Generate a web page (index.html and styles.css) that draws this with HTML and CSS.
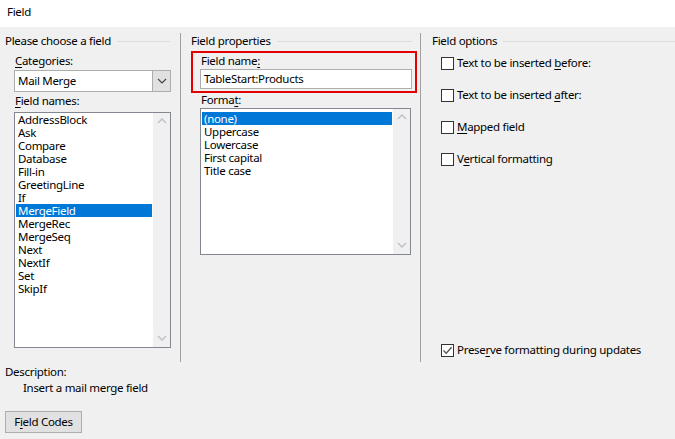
FILE: index.html
```html
<!DOCTYPE html>
<html lang="en">
<head>
  <meta charset="UTF-8" />
  <title>Field</title>
  <link rel="stylesheet" href="styles.css">
</head>
<body>
  <div class="dialog">
    <div class="titlebar">Field</div>

    <div class="body">
      <div class="columns">
        <!-- left: choose a field -->
        <section class="col col-left">
          <div class="group-head"><span>Please choose a field</span><i class="rule"></i></div>
          <div class="label label-first"><u>C</u>ategories:</div>
          <div class="combo">
            <span class="combo-value">Mail Merge</span>
            <span class="combo-btn">
              <svg width="10" height="6" viewBox="0 0 10 6"><polyline points="1,1 5,5 9,1" fill="none" stroke="#444" stroke-width="1.2"/></svg>
            </span>
          </div>
          <div class="label"><u>F</u>ield names:</div>
          <div class="listbox names">
            <ul class="items">
              <li>AddressBlock</li>
              <li>Ask</li>
              <li>Compare</li>
              <li>Database</li>
              <li>Fill-in</li>
              <li>GreetingLine</li>
              <li>If</li>
              <li class="selected">MergeField</li>
              <li>MergeRec</li>
              <li>MergeSeq</li>
              <li>Next</li>
              <li>NextIf</li>
              <li>Set</li>
              <li>SkipIf</li>
            </ul>
            <div class="scroll">
              <svg width="10" height="6" viewBox="0 0 10 6"><polyline points="1,5 5,1 9,5" fill="none" stroke="#c4c4c4" stroke-width="1.6"/></svg>
              <svg width="10" height="6" viewBox="0 0 10 6"><polyline points="1,1 5,5 9,1" fill="none" stroke="#c4c4c4" stroke-width="1.6"/></svg>
            </div>
          </div>
        </section>

        <!-- middle: field properties -->
        <section class="col col-mid">
          <div class="group-head"><span>Field properties</span><i class="rule"></i></div>
          <div class="highlight">
            <div class="label label-in">Field name<u>:</u></div>
            <div class="textbox">TableStart:Products</div>
          </div>
          <div class="label label-mid">Forma<u>t</u>:</div>
          <div class="listbox formats">
            <ul class="items">
              <li class="selected">(none)</li>
              <li>Uppercase</li>
              <li>Lowercase</li>
              <li>First capital</li>
              <li>Title case</li>
            </ul>
            <div class="scroll">
              <svg width="10" height="6" viewBox="0 0 10 6"><polyline points="1,5 5,1 9,5" fill="none" stroke="#c4c4c4" stroke-width="1.6"/></svg>
              <svg width="10" height="6" viewBox="0 0 10 6"><polyline points="1,1 5,5 9,1" fill="none" stroke="#c4c4c4" stroke-width="1.6"/></svg>
            </div>
          </div>
        </section>

        <!-- right: field options -->
        <section class="col col-right">
          <div class="group-head"><span>Field options</span><i class="rule"></i></div>
          <div class="options">
            <div class="check"><span class="box"></span><span>Text to be inserted <u>b</u>efore:</span></div>
            <div class="check"><span class="box"></span><span>Text to be inserted <u>a</u>fter:</span></div>
            <div class="check"><span class="box"></span><span><u>M</u>apped field</span></div>
            <div class="check"><span class="box"></span><span>V<u>e</u>rtical formatting</span></div>
          </div>
          <div class="check check-bottom">
            <span class="box">
              <svg width="11" height="11" viewBox="0 0 11 11"><polyline points="1.5,5.5 4.2,8.3 9.6,2.2" fill="none" stroke="#555" stroke-width="1.3"/></svg>
            </span>
            <span>Prese<u>r</u>ve formatting during updates</span>
          </div>
        </section>
      </div>

      <div class="footer">
        <div class="desc-label">Description:</div>
        <div class="desc-text">Insert a mail merge field</div>
        <button class="btn">F<u>i</u>eld Codes</button>
      </div>
    </div>
  </div>
</body>
</html>
```

FILE: styles.css
```css
:root {
  --bg: #f0f0f0;
  --text: #000;
  --rule: #dcdcdc;
  --sep: #a0a0a0;
  --list-border: #828790;
  --accent: #0078d7;
  --red: #e50000;
}

* {
  box-sizing: border-box;
}

body {
  margin: 0;
  font-family: "Noto Sans", sans-serif;
  font-size: 11.5px;
  letter-spacing: -0.3px;
  line-height: 16px;
  color: var(--text);
  background: var(--bg);
}

u {
  text-decoration-thickness: 1px;
  text-underline-offset: 2px;
}

.dialog {
  width: 675px;
  height: 439px;
  overflow: hidden;
}

.titlebar {
  height: 27px;
  background: #fff;
  padding: 4px 0 0 7px;
}

.body {
  padding-top: 6px;
}

.columns {
  display: flex;
  height: 329px;
}

.col {
  display: flex;
  flex-direction: column;
}

.col-left {
  width: 180px;
}

.col-mid {
  width: 240px;
  border-left: 1px solid var(--sep);
}

.col-right {
  flex: 1;
  border-left: 1px solid var(--sep);
}

.group-head {
  display: flex;
  align-items: center;
  height: 16px;
}

.group-head .rule {
  flex: 1;
  height: 1px;
  background: var(--rule);
  margin-left: 6px;
}

.col-left .group-head {
  padding: 0 10px 0 5px;
}

.col-mid .group-head {
  padding: 0 8px 0 10px;
}

.col-right .group-head {
  padding-left: 11px;
}

.label {
  height: 16px;
  white-space: nowrap;
}

.col-left .label {
  margin: 1px 0 3px 15px;
}

.col-left .label-first {
  margin-top: 4px;
  margin-bottom: 1px;
}

.combo {
  display: flex;
  width: 157px;
  height: 22px;
  margin-left: 14px;
  border: 1px solid #adadad;
  background: #fff;
}

.combo-value {
  flex: 1;
  padding: 2px 0 0 3px;
}

.combo-btn {
  width: 18px;
  display: flex;
  align-items: center;
  justify-content: center;
  background: #e1e1e1;
  border-left: 1px solid #adadad;
}

.listbox {
  display: flex;
  border: 1px solid var(--list-border);
  background: #fff;
}

.listbox.names {
  width: 157px;
  height: 236px;
  margin-left: 14px;
}

.listbox.formats {
  width: 211px;
  height: 147px;
  margin-left: 19px;
}

.items {
  flex: 1;
  list-style: none;
  margin: 0;
  padding: 0 1px;
}

.formats .items {
  padding-top: 3px;
}

.items li {
  height: 13px;
  line-height: 13px;
  padding-left: 2px;
  white-space: nowrap;
}

.items li.selected {
  background: var(--accent);
  color: #fff;
}

.scroll {
  width: 17px;
  background: var(--bg);
  display: flex;
  flex-direction: column;
  justify-content: space-between;
  align-items: center;
  padding: 5px 0 6px;
}

.highlight {
  width: 226px;
  height: 42px;
  margin: 2px 0 0 10px;
  padding: 0 3px 0 7px;
  border: 2px solid var(--red);
}

.label-in {
  padding-left: 1px;
}

.textbox {
  height: 20px;
  border: 1px solid #adadad;
  background: #fff;
  padding: 1px 0 0 3px;
}

.label-mid {
  margin: -1px 0 0 20px;
}

.options {
  display: flex;
  flex-direction: column;
  gap: 16px;
  margin-top: 6px;
}

.check {
  display: flex;
  align-items: center;
  height: 16px;
  padding-left: 20px;
  white-space: nowrap;
}

.check .box {
  width: 13px;
  height: 13px;
  border: 1px solid #333;
  background: #fff;
  margin-right: 3px;
  display: flex;
  align-items: center;
  justify-content: center;
}

.check-bottom {
  margin-top: auto;
  margin-bottom: 4px;
}

.footer {
  padding-left: 5px;
}

.desc-label {
  margin-top: 2px;
}

.desc-text {
  padding-left: 18px;
}

.btn {
  display: block;
  width: 77px;
  height: 22px;
  margin-top: 15px;
  padding: 0;
  font: inherit;
  letter-spacing: inherit;
  color: var(--text);
  background: #e1e1e1;
  border: 1px solid #adadad;
}
```
